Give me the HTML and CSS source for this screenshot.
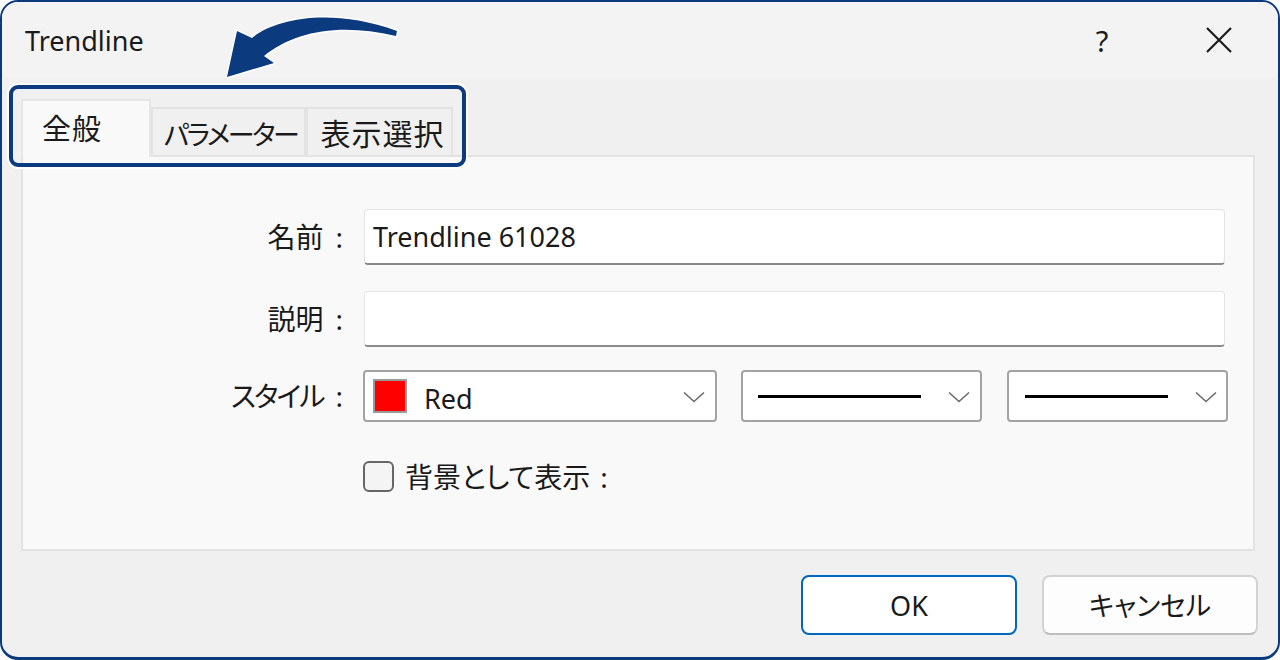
FILE: index.html
```html
<!DOCTYPE html>
<html lang="ja">
<head>
<meta charset="utf-8">
<title>Trendline</title>
<link rel="stylesheet" href="styles.css">
</head>
<body>
<div class="window">
  <div class="titlebar">
    <span class="title">Trendline</span>
    <span class="help">?</span>
    <span class="close">
      <svg width="28" height="28" viewBox="0 0 28 28"><path d="M2 2 L26 26 M26 2 L2 26" stroke="#1c1c1c" stroke-width="2.2" fill="none"/></svg>
    </span>
  </div>
  <div class="body">
    <div class="tabs">
      <div class="tab active">全般</div>
      <div class="tab t2">パラメーター</div>
      <div class="tab t3">表示選択</div>
    </div>
    <div class="panel">
      <div class="row r1">
        <span class="lbl">名前<span class="colon">:</span></span>
        <div class="input">Trendline 61028</div>
      </div>
      <div class="row r2">
        <span class="lbl">説明<span class="colon">:</span></span>
        <div class="input"></div>
      </div>
      <div class="row r3">
        <span class="lbl"><span class="kana">スタイル</span><span class="colon">:</span></span>
        <div class="combo c1">
          <span class="swatch"></span>
          <span class="ctext">Red</span>
          <svg class="chev" width="22" height="12" viewBox="0 0 22 12"><polyline points="1,1.5 11,10.5 21,1.5" fill="none" stroke="#6b6b6b" stroke-width="1.6"/></svg>
        </div>
        <div class="combo c2">
          <span class="line l2"></span>
          <svg class="chev" width="22" height="12" viewBox="0 0 22 12"><polyline points="1,1.5 11,10.5 21,1.5" fill="none" stroke="#6b6b6b" stroke-width="1.6"/></svg>
        </div>
        <div class="combo c3">
          <span class="line l3"></span>
          <svg class="chev" width="22" height="12" viewBox="0 0 22 12"><polyline points="1,1.5 11,10.5 21,1.5" fill="none" stroke="#6b6b6b" stroke-width="1.6"/></svg>
        </div>
      </div>
      <div class="row r4">
        <span class="lbl"></span>
        <span class="checkbox"></span>
        <span class="chklabel">背景として表示<span class="colon sm">:</span></span>
      </div>
    </div>
    <div class="buttons">
      <div class="btn primary">OK</div>
      <div class="btn">キャンセル</div>
    </div>
  </div>
  <div class="highlight"></div>
  <svg class="arrow" width="220" height="90" viewBox="200 0 220 90">
    <path d="M227,77 L237,31 L252,38 C275,19 330,7 397,31 L396,36 C340,23 295,31 264,56 L274,63 Z" fill="#0b3b7e" stroke="#ffffff" stroke-width="3" stroke-linejoin="round" paint-order="stroke"/>
  </svg>
</div>
</body>
</html>
```

FILE: styles.css
```css
* { box-sizing: border-box; }
html, body { margin: 0; padding: 0; background: #ffffff; }
body {
  font-family: "Noto Sans", "Noto Sans CJK JP", sans-serif;
  color: #1a1a1a;
  font-feature-settings: "palt";
}
.window {
  position: relative;
  width: 1280px;
  height: 660px;
  border: 2px solid #0b3b7e;
  border-bottom-width: 3px;
  border-radius: 18px;
  background: #f0f0f0;
  overflow: hidden;
  display: flex;
  flex-direction: column;
}
.titlebar {
  flex: none;
  height: 76px;
  background: #f3f3f3;
  display: flex;
  align-items: center;
  padding-left: 23px;
}
.title { font-size: 27px; line-height: 1; }
.help {
  margin-left: auto;
  width: 116px;
  text-align: center;
  font-size: 29px;
  line-height: 1;
}
.close {
  width: 118px;
  display: flex;
  justify-content: center;
  align-items: center;
}
.body {
  flex: 1;
  display: flex;
  flex-direction: column;
  padding: 21px 20px 0 19px;
}
.tabs {
  height: 56px;
  display: flex;
  align-items: flex-end;
}
.tab {
  height: 48px;
  background: #f0f0f0;
  border: 2px solid #e3e3e3;
  border-bottom: none;
  display: flex;
  align-items: center;
  justify-content: center;
  font-size: 28px;
  line-height: 1;
  padding-top: 4px;
}
.tab.active {
  width: 130px;
  height: 58px;
  margin-bottom: -2px;
  background: #f9f9f9;
  border-color: #e6e6e6;
  position: relative;
  z-index: 1;
  padding: 0 0 2px 19px;
  justify-content: flex-start;
  font-size: 29px;
  letter-spacing: 1px;
}
.tab.t2 { width: 155px; font-size: 27px; letter-spacing: -2.5px; padding-left: 4px; }
.tab.t3 { width: 147px; font-size: 30px; letter-spacing: 1px; padding-left: 6px; }
.panel {
  width: 1234px;
  height: 396px;
  border: 2px solid #e3e3e3;
  background: #f9f9f9;
  padding: 52px 28px 0 0;
  display: flex;
  flex-direction: column;
}
.row { display: flex; align-items: center; }
.r2 { margin-top: 26px; }
.r3 { margin-top: 23px; }
.r4 { margin-top: 39px; }
.lbl {
  flex: none;
  width: 320px;
  margin-right: 21px;
  text-align: right;
  font-size: 28px;
  line-height: 1;
}
.colon { margin-left: 12px; }
.colon.sm { margin-left: 10px; }
.kana { letter-spacing: -2px; }
.r3 .lbl, .r4 .lbl { margin-right: 20px; }
.input {
  flex: 1;
  height: 56px;
  background: #ffffff;
  border: 1px solid #e4e4e4;
  border-bottom: 2px solid #8a8a8a;
  border-radius: 4px;
  padding-left: 8px;
  display: flex;
  align-items: center;
  font-size: 27px;
  line-height: 1;
}
.combo {
  flex: none;
  height: 52px;
  background: #ffffff;
  border: 2px solid #a3a3a3;
  border-radius: 4px;
  display: flex;
  align-items: center;
  padding: 0 10px 0 8px;
}
.c1 { width: 354px; }
.c2 { width: 241px; margin-left: 24px; padding-left: 15px; padding-right: 10px; }
.c3 { width: 221px; margin-left: 25px; padding-left: 16px; padding-right: 9px; }
.swatch {
  width: 34px;
  height: 34px;
  background: #ff0000;
  border: 2px solid #9a9a9a;
  flex: none;
}
.ctext {
  margin-left: 17px;
  margin-top: 4px;
  font-size: 27px;
  line-height: 1;
  flex: 1;
}
.line {
  height: 3px;
  background: #000000;
  flex: none;
}
.l2 { width: 163px; margin-right: auto; }
.l3 { width: 143px; margin-right: auto; }
.chev { flex: none; margin-top: 2px; }
.checkbox {
  flex: none;
  width: 31px;
  height: 31px;
  border: 2px solid #666666;
  border-radius: 6px;
  background: #f4f4f4;
}
.chklabel {
  margin-left: 11px;
  font-size: 28px;
  line-height: 1;
}
.buttons {
  margin-top: 24px;
  display: flex;
  justify-content: flex-end;
  gap: 25px;
}
.btn {
  width: 216px;
  height: 60px;
  border: 2px solid #d3d3d3;
  border-bottom-color: #bdbdbd;
  border-radius: 8px;
  background: #fdfdfd;
  display: flex;
  align-items: center;
  justify-content: center;
  font-size: 27px;
  line-height: 1;
}
.btn.primary {
  border-color: #0067c0;
  background: #ffffff;
}
.highlight {
  position: absolute;
  left: 7px;
  top: 83px;
  width: 457px;
  height: 82px;
  border: 4px solid #0b3b7e;
  border-radius: 9px;
  box-shadow: 0 0 0 2px #ffffff;
  pointer-events: none;
  z-index: 5;
}
.arrow {
  position: absolute;
  left: 198px;
  top: -2px;
  z-index: 6;
  pointer-events: none;
}
```
